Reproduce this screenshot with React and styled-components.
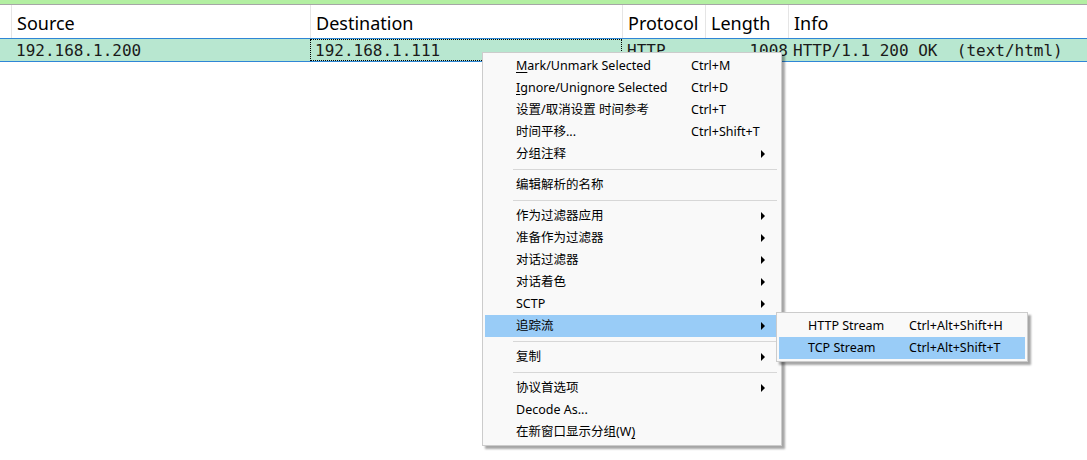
import React from "react";
import styled, { createGlobalStyle } from "styled-components";

const GlobalStyle = createGlobalStyle`
  html, body {
    margin: 0;
    padding: 0;
    background: #ffffff;
  }
`;

const columns = [
  { key: "no", title: "", width: 11 },
  { key: "source", title: "Source", width: 299 },
  { key: "destination", title: "Destination", width: 312 },
  { key: "protocol", title: "Protocol", width: 83 },
  { key: "length", title: "Length", width: 83, align: "right" },
  { key: "info", title: "Info" },
];

const gridTemplate = columns.map((c) => (c.width ? `${c.width}px` : "1fr")).join(" ");

const packet = {
  no: "",
  source: "192.168.1.200",
  destination: "192.168.1.111",
  protocol: "HTTP",
  length: "1008",
  info: "HTTP/1.1 200 OK  (text/html)",
};

const menuItems = [
  { label: "Mark/Unmark Selected", mnemonic: 0, shortcut: "Ctrl+M" },
  { label: "Ignore/Unignore Selected", mnemonic: 0, shortcut: "Ctrl+D" },
  { label: "设置/取消设置 时间参考", shortcut: "Ctrl+T" },
  { label: "时间平移...", shortcut: "Ctrl+Shift+T" },
  { label: "分组注释", submenu: true },
  { separator: true },
  { label: "编辑解析的名称" },
  { separator: true },
  { label: "作为过滤器应用", submenu: true },
  { label: "准备作为过滤器", submenu: true },
  { label: "对话过滤器", submenu: true },
  { label: "对话着色", submenu: true },
  { label: "SCTP", submenu: true },
  { label: "追踪流", submenu: true, active: true },
  { separator: true },
  { label: "复制", submenu: true },
  { separator: true },
  { label: "协议首选项", submenu: true },
  { label: "Decode As..." },
  { label: "在新窗口显示分组(W)", mnemonic: 10 },
];

const streamItems = [
  { label: "HTTP Stream", shortcut: "Ctrl+Alt+Shift+H" },
  { label: "TCP Stream", shortcut: "Ctrl+Alt+Shift+T", active: true },
];

const Page = styled.div`
  position: relative;
  width: 1087px;
  height: 460px;
  overflow: hidden;
  background: #ffffff;
`;

const TopStrip = styled.div`
  height: 4px;
  background: #b3efa2;
  border-bottom: 1px solid #a6a6a6;
`;

const HeaderRow = styled.div`
  display: grid;
  grid-template-columns: ${gridTemplate};
  height: 33px;
  background: #ffffff;
`;

const HeaderCell = styled.div`
  display: flex;
  align-items: center;
  padding: 2px 5px 0;
  border-left: ${(p) => (p.$first ? "none" : "1px solid #e5e5e5")};
  font-family: "Noto Sans", "Open Sans", sans-serif;
  font-size: 18px;
  color: #000000;
  white-space: nowrap;
  overflow: hidden;
`;

const PacketRow = styled.div`
  display: grid;
  grid-template-columns: ${gridTemplate};
  height: 22px;
  background: #b8e7d0;
  border-top: 1px solid #2f86d6;
  border-bottom: 1px solid #2f86d6;
`;

const PacketCell = styled.div`
  display: flex;
  align-items: center;
  justify-content: ${(p) => (p.$align === "right" ? "flex-end" : "flex-start")};
  padding: 0 ${(p) => (p.$align === "right" ? "0" : "5px")};
  font-family: "DejaVu Sans Mono", "Liberation Mono", monospace;
  font-size: 16px;
  color: #1a1a1a;
  white-space: pre;
  overflow: hidden;
  outline: ${(p) => (p.$focused ? "1px dotted #000000" : "none")};
  outline-offset: -1px;
`;

const Menu = styled.div`
  position: absolute;
  left: ${(p) => p.$left}px;
  top: ${(p) => p.$top}px;
  width: ${(p) => p.$width}px;
  padding: 2px 0;
  background: #f9f9f9;
  border: 1px solid #cccccc;
  box-shadow: 3px 3px 2px rgba(0, 0, 0, 0.35);
  font-family: "Noto Sans", "Noto Sans CJK SC", sans-serif;
  font-size: 12.5px;
  color: #000000;
`;

const Item = styled.div`
  display: grid;
  grid-template-columns: ${(p) => p.$textCol}px 1fr 18px;
  align-items: center;
  height: 22px;
  margin: 0 2px;
  padding-left: ${(p) => p.$indent}px;
  background: ${(p) => (p.$active ? "#99ccf7" : "transparent")};
  white-space: nowrap;
`;

const Label = styled.span`
  line-height: 22px;
`;

const Mnemonic = styled.span`
  text-decoration: underline;
  text-underline-offset: 2px;
`;

const Arrow = styled.span`
  width: 0;
  height: 0;
  border-top: 4px solid transparent;
  border-bottom: 4px solid transparent;
  border-left: 4px solid #000000;
`;

const Separator = styled.div`
  height: 1px;
  margin: 4px 4px 4px 30px;
  background: #d7d7d7;
`;

function renderLabel(item) {
  if (item.mnemonic === undefined) return item.label;
  const i = item.mnemonic;
  return (
    <>
      {item.label.slice(0, i)}
      <Mnemonic>{item.label[i]}</Mnemonic>
      {item.label.slice(i + 1)}
    </>
  );
}

function ContextMenu({ items, left, top, width, indent, textCol }) {
  return (
    <Menu $left={left} $top={top} $width={width}>
      {items.map((item, i) =>
        item.separator ? (
          <Separator key={i} />
        ) : (
          <Item key={i} $active={item.active} $indent={indent} $textCol={textCol}>
            <Label>{renderLabel(item)}</Label>
            <Label>{item.shortcut || ""}</Label>
            {item.submenu ? <Arrow /> : <span />}
          </Item>
        )
      )}
    </Menu>
  );
}

export default function App() {
  return (
    <Page>
      <GlobalStyle />
      <TopStrip />
      <HeaderRow>
        {columns.map((c, i) => (
          <HeaderCell key={c.key} $first={i === 0}>
            {c.title}
          </HeaderCell>
        ))}
      </HeaderRow>
      <PacketRow>
        {columns.map((c) => (
          <PacketCell
            key={c.key}
            $align={c.align}
            $focused={c.key === "destination"}
          >
            {packet[c.key]}
          </PacketCell>
        ))}
      </PacketRow>

      <ContextMenu
        items={menuItems}
        left={482}
        top={52}
        width={298}
        indent={31}
        textCol={175}
      />
      <ContextMenu
        items={streamItems}
        left={776}
        top={312}
        width={250}
        indent={29}
        textCol={101}
      />
    </Page>
  );
}
